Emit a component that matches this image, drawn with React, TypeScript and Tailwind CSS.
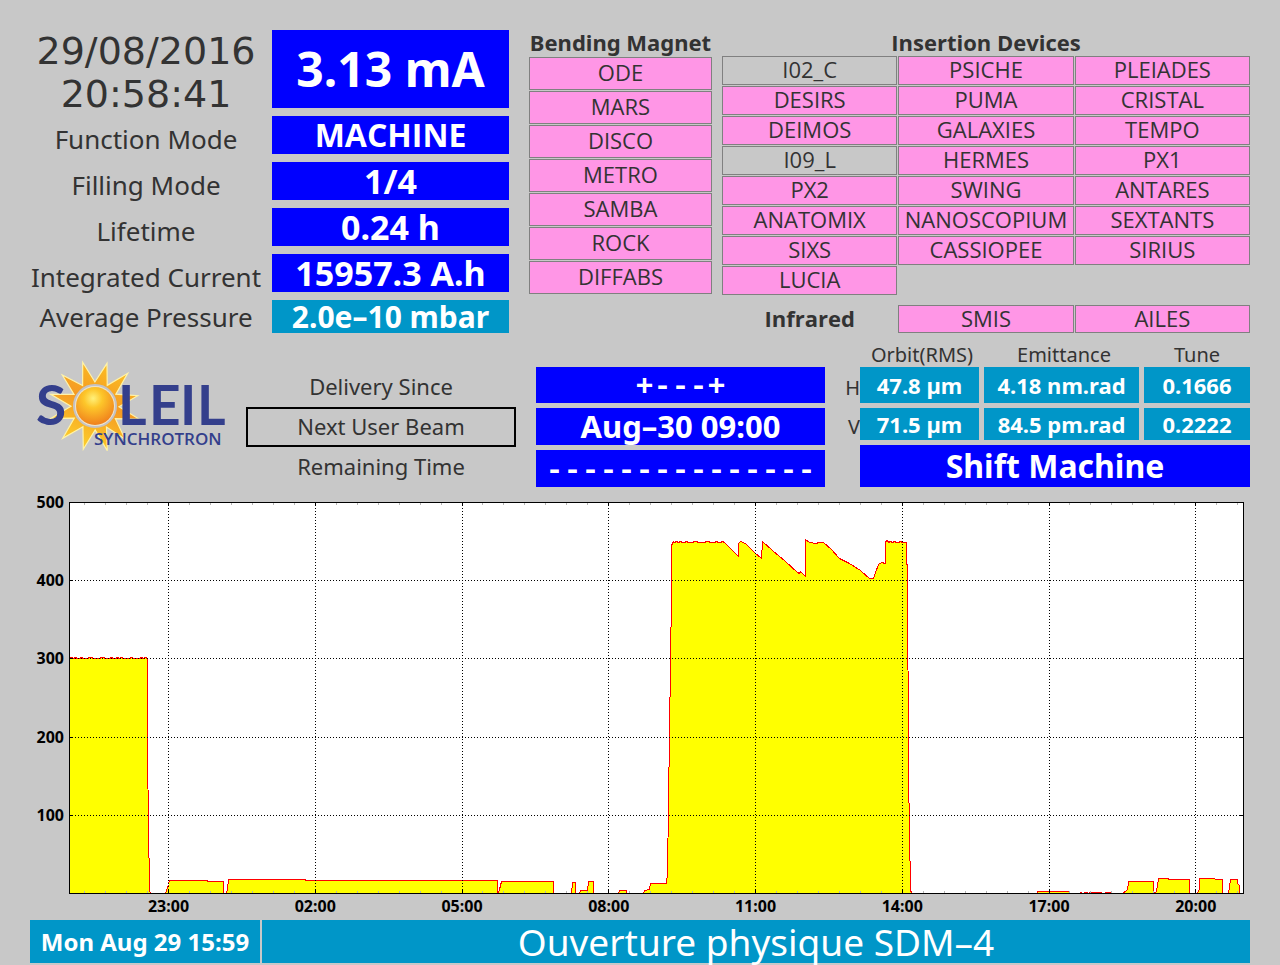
import type { ReactNode } from "react";

type Tone = "blue" | "teal";

type Beamline = {
  name: string;
  idle?: boolean;
};

type StatusRow = {
  label: string;
  value: string;
  rowClass: string;
  valueClass: string;
};

const toneClasses: Record<Tone, string> = {
  blue: "bg-[#0000ff] text-white",
  teal: "bg-[#0096c8] text-white",
};

const statusRows: StatusRow[] = [
  {
    label: "Function Mode",
    value: "MACHINE",
    rowClass: "h-[46px]",
    valueClass: "mb-2 bg-[#0000ff] text-[32px] font-['Open_Sans']",
  },
  {
    label: "Filling Mode",
    value: "1/4",
    rowClass: "h-[46px]",
    valueClass: "mb-2 bg-[#0000ff] text-[34px]",
  },
  {
    label: "Lifetime",
    value: "0.24 h",
    rowClass: "h-[46px]",
    valueClass: "mb-2 bg-[#0000ff] text-[34px]",
  },
  {
    label: "Integrated Current",
    value: "15957.3 A.h",
    rowClass: "h-[46px]",
    valueClass: "mb-2 bg-[#0000ff] text-[34px]",
  },
  {
    label: "Average Pressure",
    value: "2.0e–10 mbar",
    rowClass: "h-[33px]",
    valueClass: "bg-[#0096c8] text-[30px]",
  },
];

const bendingMagnets: Beamline[] = [
  { name: "ODE" },
  { name: "MARS" },
  { name: "DISCO" },
  { name: "METRO" },
  { name: "SAMBA" },
  { name: "ROCK" },
  { name: "DIFFABS" },
];

const insertionDevices: Beamline[] = [
  { name: "I02_C", idle: true },
  { name: "PSICHE" },
  { name: "PLEIADES" },
  { name: "DESIRS" },
  { name: "PUMA" },
  { name: "CRISTAL" },
  { name: "DEIMOS" },
  { name: "GALAXIES" },
  { name: "TEMPO" },
  { name: "I09_L", idle: true },
  { name: "HERMES" },
  { name: "PX1" },
  { name: "PX2" },
  { name: "SWING" },
  { name: "ANTARES" },
  { name: "ANATOMIX" },
  { name: "NANOSCOPIUM" },
  { name: "SEXTANTS" },
  { name: "SIXS" },
  { name: "CASSIOPEE" },
  { name: "SIRIUS" },
  { name: "LUCIA" },
];

const beamQuality = [
  { plane: "H", height: "h-[41px]", values: ["47.8 µm", "4.18 nm.rad", "0.1666"] },
  { plane: "V", height: "h-[37px]", values: ["71.5 µm", "84.5 pm.rad", "0.2222"] },
];

function BeamlineTag({ name, idle, height }: Beamline & { height: string }) {
  return (
    <li
      className={`flex items-center justify-center border border-[#808080] pb-[3px] font-['Open_Sans'] text-[22px] leading-none ${height} ${
        idle ? "bg-[#c8c8c8]" : "bg-[#ff96e6]"
      }`}
    >
      {name}
    </li>
  );
}

function Readout({
  tone,
  className,
  children,
}: {
  tone: Tone;
  className: string;
  children: ReactNode;
}) {
  return (
    <div
      className={`flex items-center justify-center whitespace-nowrap ${toneClasses[tone]} ${className}`}
    >
      {children}
    </div>
  );
}

/* Logo */

const SUN = { x: 65, y: 46 };

const rayTips = [
  [52.7, 2.3],
  [77, 3.3],
  [97.7, 13.3],
  [107.7, 35.7],
  [109, 59],
  [95, 79],
  [77.3, 90.7],
  [53.3, 89.3],
  [32.7, 78.3],
  [21, 58.3],
  [20.7, 34.3],
  [32.3, 15],
];

const sunRays = rayTips
  .map(([x, y], index) => {
    const next = rayTips[(index + 1) % rayTips.length];
    const midX = (x + next[0]) / 2 - SUN.x;
    const midY = (y + next[1]) / 2 - SUN.y;
    const scale = 24 / Math.hypot(midX, midY);
    return `${x},${y} ${SUN.x + midX * scale},${SUN.y + midY * scale}`;
  })
  .join(" ");

function SoleilLogo() {
  return (
    <svg viewBox="0 0 206 96" className="w-full" role="img" aria-label="SOLEIL Synchrotron">
      <defs>
        <radialGradient id="ball" cx="0.45" cy="0.3" r="0.7">
          <stop offset="0" stopColor="#fff07a" />
          <stop offset="0.35" stopColor="#fdc62a" />
          <stop offset="1" stopColor="#f0801c" />
        </radialGradient>
        <linearGradient id="rays" x1="0.7" y1="0" x2="0.3" y2="1">
          <stop offset="0" stopColor="#fbc024" />
          <stop offset="0.45" stopColor="#f59a22" />
          <stop offset="1" stopColor="#fdd42c" />
        </linearGradient>
      </defs>
      <polygon points={sunRays} fill="url(#rays)" stroke="#fff3a8" strokeWidth="1.2" />
      <circle cx={SUN.x} cy={SUN.y} r="21" fill="#efe4c8" stroke="#c4c2c4" strokeWidth="2" />
      <circle cx={SUN.x} cy={SUN.y} r="19" fill="url(#ball)" />
      <g fill="#343f8c" fontFamily="Lato, sans-serif" fontWeight="700">
        <text y="65" x="6 88 119 150 167" fontSize="55">
          SLEIL
        </text>
        <text x="64" y="85" fontSize="17" fontFamily="'Open Sans', sans-serif" fontWeight="600">
          SYNCHROTRON
        </text>
      </g>
    </svg>
  );
}

/* Beam current over the last 24 hours */

const PLOT = { left: 39, right: 1213, top: 15, bottom: 406 };
const HOUR_TICK = 146.75;
const FIRST_TICK = 138.5;

const hourLabels = ["23:00", "02:00", "05:00", "08:00", "11:00", "14:00", "17:00", "20:00"];
const currentLabels = [100, 200, 300, 400, 500];
const minorTicks = Array.from(
  { length: 56 },
  (_, index) => FIRST_TICK + ((index - 4) * HOUR_TICK) / 7,
).filter((x) => x < PLOT.right);

function topUp(from: number, to: number, level: number): number[][] {
  const points: number[][] = [];
  for (let x = from, step = 0; x < to; x += 2, step += 1) {
    points.push([x, level + (step % 5 === 1 || step % 7 === 3 ? 1 : 0)]);
  }
  points.push([to, level]);
  return points;
}

// [distance from the left edge, height above the time axis]
const trace: number[][] = [
  ...topUp(0, 78, 235),
  [78, 140], [79, 70], [80, 3], [81, 0],
  [96, 0], [97, 3], [99, 9], [100, 13], [138, 13], [138, 12], [154, 12], [154, 0],
  [157, 0], [158, 4], [159, 14], [236, 14], [236, 13], [428, 13], [428, 0],
  [429, 0], [430, 4], [432, 12], [484, 12], [484, 0],
  [502, 0], [503, 11], [506, 11], [506, 0],
  [510, 0], [511, 3], [518, 3], [519, 12], [524, 12], [524, 0],
  [549, 0], [550, 3], [557, 3], [557, 0],
  [574, 0], [575, 3], [580, 4], [581, 10], [597, 10], [598, 20],
  [600, 160], [602, 300], [602, 348], [604, 352],
  ...topUp(605, 655, 351),
  [669, 337], [669, 350], [671, 352], [676, 350], [685, 341], [692, 335], [693, 352],
  [703, 343], [716, 332], [728, 321], [730, 320], [731, 322], [736, 317],
  [736, 354], [740, 351], [746, 350], [750, 351], [754, 351], [762, 344], [770, 335],
  [780, 330], [791, 323], [800, 315], [804, 315], [806, 321], [809, 329], [812, 331],
  [816, 330], [816, 352], [818, 353],
  ...topUp(819, 837, 351),
  [837, 329], [838, 329], [839, 120], [841, 4], [842, 0],
  [968, 0], [968, 2], [1000, 2], [1000, 0],
  [1011, 0], [1011, 1], [1013, 0], [1017, 1], [1019, 0], [1021, 1], [1032, 1], [1033, 0],
  [1038, 1], [1041, 1], [1042, 0],
  [1054, 0], [1055, 2], [1058, 3], [1059, 12], [1084, 12], [1084, 0],
  [1087, 2], [1089, 15], [1099, 15], [1099, 14], [1120, 14], [1120, 0],
  [1128, 0], [1130, 5], [1130, 15], [1145, 15], [1146, 14], [1153, 14], [1153, 0],
  [1159, 0], [1161, 14], [1168, 14], [1168, 10], [1170, 8], [1170, 0], [1174, 0],
];

// half-pixel shift keeps the one-pixel line on the grid
const tracePoints = trace
  .map(([x, height]) => `${PLOT.left + x + 0.5},${PLOT.bottom - height + 0.5}`)
  .join(" ");

function CurrentChart() {
  const plotHeight = PLOT.bottom - PLOT.top;

  return (
    <svg
      viewBox="0 0 1220 433"
      className="block w-full"
      role="img"
      aria-label="Stored current in mA over the last 24 hours"
    >
      <g shapeRendering="crispEdges">
        <rect
          x={PLOT.left}
          y={PLOT.top}
          width={PLOT.right - PLOT.left}
          height={plotHeight}
          fill="#ffffff"
        />
        <polygon
          points={`${PLOT.left},${PLOT.bottom} ${tracePoints} ${PLOT.right},${PLOT.bottom}`}
          fill="#ffff00"
        />
        <polyline points={tracePoints} fill="none" stroke="#ff0000" />
        {minorTicks.map((x) => (
          <path
            key={x}
            d={`M${x} ${PLOT.top}v3M${x} ${PLOT.bottom}v-2`}
            stroke="#b4b4b4"
          />
        ))}
        <g stroke="#000000" strokeDasharray="1 2">
          {hourLabels.map((label, index) => {
            const x = FIRST_TICK + index * HOUR_TICK;
            return <line key={label} x1={x} x2={x} y1={PLOT.top} y2={PLOT.bottom} />;
          })}
          {[1, 2, 3, 4].map((step) => {
            const y = PLOT.bottom + 0.5 - (step * plotHeight) / 5;
            return <line key={step} x1={PLOT.left} x2={PLOT.right} y1={y} y2={y} />;
          })}
        </g>
        <g stroke="#000000">
          {hourLabels.map((label, index) => (
            <path
              key={label}
              d={`M${FIRST_TICK + index * HOUR_TICK} ${PLOT.top}v4m0 ${plotHeight - 8}v4`}
            />
          ))}
          {[1, 2, 3, 4].map((step) => (
            <path
              key={step}
              d={`M${PLOT.left} ${PLOT.bottom + 0.5 - (step * plotHeight) / 5}h4m${PLOT.right - PLOT.left - 8} 0h4`}
            />
          ))}
          <rect
            x={PLOT.left + 0.5}
            y={PLOT.top + 0.5}
            width={PLOT.right - PLOT.left}
            height={plotHeight}
            fill="none"
          />
        </g>
      </g>
      <g fontSize="16" fontWeight="700" fill="#000000">
        {currentLabels.map((value) => (
          <text
            key={value}
            x={34}
            y={PLOT.bottom + 6 - (value * plotHeight) / 500}
            textAnchor="end"
          >
            {value}
          </text>
        ))}
        {hourLabels.map((label, index) => (
          <text key={label} x={FIRST_TICK + index * HOUR_TICK} y={425} textAnchor="middle">
            {label}
          </text>
        ))}
      </g>
    </svg>
  );
}

export default function App() {
  return (
    <main className="min-h-screen bg-[#c8c8c8] px-[30px] pt-[30px] font-['Noto_Sans',sans-serif] text-[#333333]">
      <section className="grid grid-cols-[499fr_193fr_528fr] items-start">
        <dl className="mr-5">
          <div className="grid h-[86px] grid-cols-[232fr_237fr] gap-x-[10px]">
            <dt className="text-center font-['DejaVu_Sans'] text-[38px] leading-[43px]">
              <time dateTime="2016-08-29T20:58:41">
                29/08/2016
                <br />
                20:58:41
              </time>
            </dt>
            <dd className="mb-2 flex items-center justify-center bg-[#0000ff] text-[48px] leading-none font-bold text-white">
              3.13 mA
            </dd>
          </div>
          {statusRows.map((row) => (
            <div
              key={row.label}
              className={`grid grid-cols-[232fr_237fr] gap-x-[10px] leading-none whitespace-nowrap ${row.rowClass}`}
            >
              <dt className="flex items-center justify-center text-[26px]">{row.label}</dt>
              <dd
                className={`flex items-center justify-center font-bold text-white ${row.valueClass}`}
              >
                {row.value}
              </dd>
            </div>
          ))}
        </dl>

        <div className="mr-[10px]">
          <h2 className="h-[27px] text-center text-[22px] leading-[24px] font-bold whitespace-nowrap">
            Bending Magnet
          </h2>
          <ul className="grid gap-px">
            {bendingMagnets.map((line) => (
              <BeamlineTag key={line.name} {...line} height="h-[33px]" />
            ))}
          </ul>
        </div>

        <div>
          <h2 className="h-[26px] text-center font-['Open_Sans'] text-[22px] leading-[24px] font-bold">
            Insertion Devices
          </h2>
          <ul className="grid grid-cols-3 gap-px">
            {insertionDevices.map((line) => (
              <BeamlineTag key={line.name} {...line} height="h-[29px]" />
            ))}
          </ul>
          <div className="mt-[10px] grid grid-cols-3 gap-px">
            <h2 className="text-center font-['Open_Sans'] text-[22px] leading-[26px] font-bold">
              Infrared
            </h2>
            <ul className="col-span-2 grid grid-cols-2 gap-px">
              <BeamlineTag name="SMIS" height="h-[28px]" />
              <BeamlineTag name="AILES" height="h-[28px]" />
            </ul>
          </div>
        </div>
      </section>

      <section className="mt-[9px] grid grid-cols-[216fr_290fr_309fr_405fr]">
        <div className="mr-[10px] pt-[18px]">
          <SoleilLogo />
        </div>

        <div className="mr-5 grid grid-rows-[40px_40px_40px] pt-[25px] text-center text-[22px] leading-[38px]">
          <span>Delivery Since</span>
          <span className="border-2 border-black leading-[34px]">Next User Beam</span>
          <span>Remaining Time</span>
        </div>

        <div className="mr-5 grid content-start gap-[5px] pt-[25px] font-bold">
          <Readout
            tone="blue"
            className="h-[36px] pt-1 font-['Liberation_Mono'] text-[30px] leading-none"
          >
            +---+
          </Readout>
          <Readout tone="blue" className="h-[37px] text-[31px] leading-none">
            Aug–30 09:00
          </Readout>
          <Readout
            tone="blue"
            className="h-[37px] pt-1 font-['Liberation_Mono'] text-[30px] leading-none"
          >
            ---------------
          </Readout>
        </div>

        <div>
          <table className="w-full table-fixed border-separate border-spacing-0 whitespace-nowrap">
            <colgroup>
              <col className="w-[15px]" />
              <col className="w-[124px]" />
              <col className="w-[160px]" />
              <col />
            </colgroup>
            <thead>
              <tr className="h-[25px] text-[20px] leading-none">
                <td />
                <th className="font-normal">Orbit(RMS)</th>
                <th className="font-normal">Emittance</th>
                <th className="font-normal">Tune</th>
              </tr>
            </thead>
            <tbody>
              {beamQuality.map((row) => (
                <tr key={row.plane} className={`text-[22px] leading-none ${row.height}`}>
                  <th scope="row" className="text-right text-[20px] font-normal">
                    {row.plane}
                  </th>
                  {row.values.map((value) => (
                    <td
                      key={value}
                      className="border-r-[5px] border-b-[5px] border-[#c8c8c8] bg-[#0096c8] text-center font-bold text-white last:border-r-0"
                    >
                      {value}
                    </td>
                  ))}
                </tr>
              ))}
            </tbody>
          </table>
          <Readout tone="blue" className="ml-[15px] h-[42px] text-[32px] leading-none font-bold">
            Shift Machine
          </Readout>
        </div>
      </section>

      <CurrentChart />

      <footer className="flex h-[43px] gap-0.5">
        <Readout tone="teal" className="w-[230px] text-[24px] leading-none font-bold">
          Mon Aug 29 15:59
        </Readout>
        <Readout tone="teal" className="flex-1 text-[37px] leading-[40px]">
          Ouverture physique SDM–4
        </Readout>
      </footer>
    </main>
  );
}
